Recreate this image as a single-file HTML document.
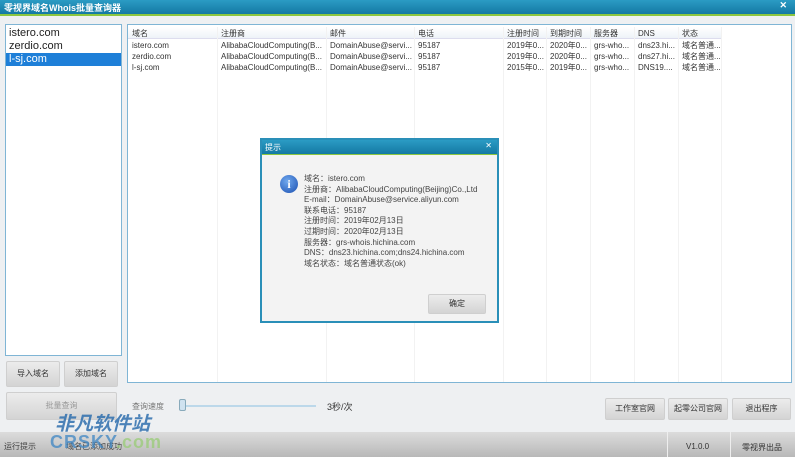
<!DOCTYPE html>
<html><head><meta charset="utf-8"><style>
*{margin:0;padding:0;box-sizing:border-box}
body{width:795px;height:457px;position:relative;background:#eef0f2;font-family:"Liberation Sans","Noto Sans CJK SC",sans-serif;overflow:hidden;font-size:8px;color:#333}
.abs{position:absolute}
.title{left:0;top:0;width:795px;height:16px;background:linear-gradient(#2b9bc4,#1479a3);border-bottom:2px solid #8cc63f;color:#fff;font-size:9px;font-weight:bold;padding:1px 4px}
.list{left:5px;top:24px;width:117px;height:332px;background:#fff;border:1px solid #7fb5d5;font-size:11px;color:#222;padding-top:2px}
.list div{height:13px;line-height:13px;padding-left:3px}
.sel{background:#1e7fd8;color:#fff}
.table{left:127px;top:24px;width:665px;height:359px;background:#fff;border:1px solid #7fb5d5}
.cell{position:absolute;height:11px;line-height:11px;padding-left:4px;white-space:nowrap;overflow:hidden;font-size:8px}
.vl{position:absolute;top:2px;width:1px;height:355px;background:#f2f2f2}
.hdr{position:absolute;left:0;top:2px;width:593px;height:12px;background:linear-gradient(#fff,#eef3f8);border-bottom:1px solid #dde}
.btn{position:absolute;background:linear-gradient(#ececec,#d4d4d4);border:1px solid #cfcfcf;font-size:8px;color:#333;text-align:center;border-radius:2px}
.dlg{left:260px;top:138px;width:239px;height:185px;background:#f3f3f3;border:2px solid #2a8fb8}
.dlgt{left:0;top:0;width:235px;height:15px;background:linear-gradient(#2b9bc4,#1479a3);border-bottom:1px solid #8cc63f;color:#fff;font-size:8px;padding:2px 3px}
.status{left:0;top:432px;width:795px;height:25px;background:linear-gradient(#dcdcdc,#b8b8b8)}
</style></head><body>
<div class="abs title">零视界域名Whois批量查询器<span style="position:absolute;right:8px;top:0">✕</span></div>
<div class="abs list"><div>istero.com</div><div>zerdio.com</div><div class="sel">l-sj.com</div></div>
<div class="abs table">
<div class="hdr"></div>
<div class="vl" style="left:89px"></div><div class="vl" style="left:198px"></div><div class="vl" style="left:286px"></div><div class="vl" style="left:375px"></div><div class="vl" style="left:418px"></div><div class="vl" style="left:462px"></div><div class="vl" style="left:506px"></div><div class="vl" style="left:550px"></div><div class="vl" style="left:593px"></div>
<div class="cell" style="left:0;top:3px">域名</div><div class="cell" style="left:89px;top:3px">注册商</div><div class="cell" style="left:198px;top:3px">邮件</div><div class="cell" style="left:286px;top:3px">电话</div><div class="cell" style="left:375px;top:3px">注册时间</div><div class="cell" style="left:418px;top:3px">到期时间</div><div class="cell" style="left:462px;top:3px">服务器</div><div class="cell" style="left:506px;top:3px">DNS</div><div class="cell" style="left:550px;top:3px">状态</div>
<div class="cell" style="left:0;top:15px">istero.com</div><div class="cell" style="left:89px;top:15px">AlibabaCloudComputing(B...</div><div class="cell" style="left:198px;top:15px;width:88px">DomainAbuse@servi...</div><div class="cell" style="left:286px;top:15px">95187</div><div class="cell" style="left:375px;top:15px">2019年0...</div><div class="cell" style="left:418px;top:15px">2020年0...</div><div class="cell" style="left:462px;top:15px">grs-who...</div><div class="cell" style="left:506px;top:15px">dns23.hi...</div><div class="cell" style="left:550px;top:15px">域名普通...</div>
<div class="cell" style="left:0;top:26px">zerdio.com</div><div class="cell" style="left:89px;top:26px">AlibabaCloudComputing(B...</div><div class="cell" style="left:198px;top:26px;width:88px">DomainAbuse@servi...</div><div class="cell" style="left:286px;top:26px">95187</div><div class="cell" style="left:375px;top:26px">2019年0...</div><div class="cell" style="left:418px;top:26px">2020年0...</div><div class="cell" style="left:462px;top:26px">grs-who...</div><div class="cell" style="left:506px;top:26px">dns27.hi...</div><div class="cell" style="left:550px;top:26px">域名普通...</div>
<div class="cell" style="left:0;top:37px">l-sj.com</div><div class="cell" style="left:89px;top:37px">AlibabaCloudComputing(B...</div><div class="cell" style="left:198px;top:37px;width:88px">DomainAbuse@servi...</div><div class="cell" style="left:286px;top:37px">95187</div><div class="cell" style="left:375px;top:37px">2015年0...</div><div class="cell" style="left:418px;top:37px">2019年0...</div><div class="cell" style="left:462px;top:37px">grs-who...</div><div class="cell" style="left:506px;top:37px">DNS19....</div><div class="cell" style="left:550px;top:37px">域名普通...</div>
</div>
<div class="btn" style="left:6px;top:361px;width:54px;height:26px;line-height:24px">导入域名</div>
<div class="btn" style="left:64px;top:361px;width:54px;height:26px;line-height:24px">添加域名</div>
<div class="btn" style="left:6px;top:392px;width:111px;height:28px;line-height:26px;color:#999">批量查询</div>
<div class="abs" style="left:132px;top:401px;font-size:8px;color:#777">查询速度</div>
<div class="abs" style="left:183px;top:405px;width:133px;height:2px;background:#bcd8ea"></div>
<div class="abs" style="left:179px;top:399px;width:7px;height:12px;background:#cfe2f0;border:1px solid #8ab;border-radius:2px"></div>
<div class="abs" style="left:327px;top:400px;font-size:9px">3秒/次</div>
<div class="btn" style="left:605px;top:398px;width:60px;height:22px;line-height:20px">工作室官网</div>
<div class="btn" style="left:668px;top:398px;width:60px;height:22px;line-height:20px">起零公司官网</div>
<div class="btn" style="left:732px;top:398px;width:59px;height:22px;line-height:20px">退出程序</div>
<div class="abs status"></div>
<div class="abs" style="left:667px;top:432px;width:1px;height:25px;background:#eee"></div>
<div class="abs" style="left:730px;top:432px;width:1px;height:25px;background:#eee"></div>
<div class="abs" style="left:686px;top:442px;font-size:8px">V1.0.0</div>
<div class="abs" style="left:742px;top:442px;font-size:8px">零视界出品</div>
<div class="abs" style="left:4px;top:441px;font-size:8px;color:#444">运行提示</div>
<div class="abs" style="left:66px;top:441px;font-size:8px;color:#444">域名已添加成功</div>
<div class="abs" style="left:55px;top:409px;font-size:19px;font-weight:bold;font-style:italic;color:#2f6fae;opacity:.85">非凡软件站</div>
<div class="abs" style="left:50px;top:432px;font-size:18px;font-weight:bold;color:#3e86c4;opacity:.75;letter-spacing:1px">CRSKY<span style="color:#9c7">.com</span></div>
<div class="abs dlg">
<div class="abs dlgt">提示<span style="position:absolute;right:5px;top:1px">✕</span></div>
<div class="abs" style="left:18px;top:35px;width:18px;height:18px;border-radius:50%;background:radial-gradient(circle at 40% 35%,#6fa8ee,#1b4fb0);color:#fff;font-weight:bold;font-size:12px;text-align:center;line-height:18px;font-family:'Liberation Serif',serif">i</div>
<div class="abs" style="left:42px;top:34px;font-size:8px;line-height:10.6px;color:#444;white-space:nowrap">域名：istero.com<br>注册商：AlibabaCloudComputing(Beijing)Co.,Ltd<br>E-mail：DomainAbuse@service.aliyun.com<br>联系电话：95187<br>注册时间：2019年02月13日<br>过期时间：2020年02月13日<br>服务器：grs-whois.hichina.com<br>DNS：dns23.hichina.com;dns24.hichina.com<br>域名状态：域名普通状态(ok)</div>
<div class="btn" style="left:166px;top:154px;width:58px;height:20px;line-height:18px">确定</div>
</div>
</body></html>
